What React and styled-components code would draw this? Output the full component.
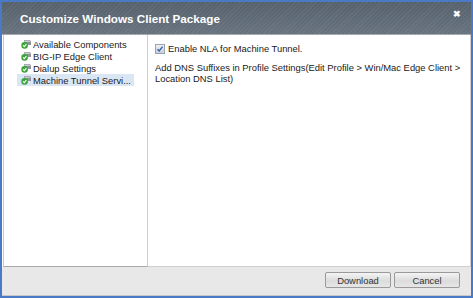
import React from "react";
import styled, { createGlobalStyle } from "styled-components";

const GlobalStyle = createGlobalStyle`
  html, body {
    margin: 0;
    padding: 0;
    background: #ffffff;
  }
  body {
    font-family: "Liberation Sans", Arial, sans-serif;
  }
`;

const Window = styled.div`
  box-sizing: border-box;
  width: 473px;
  height: 298px;
  border: 2px solid #4a79c6;
  display: flex;
  flex-direction: column;
  background: #e8e8e8;
`;

const TitleBar = styled.div`
  height: 32px;
  flex: none;
  display: flex;
  align-items: center;
  justify-content: space-between;
  padding: 0 10px 0 18px;
  background:
    repeating-linear-gradient(
      135deg,
      rgba(255, 255, 255, 0.05) 0px,
      rgba(255, 255, 255, 0.05) 1px,
      rgba(0, 0, 0, 0) 1px,
      rgba(0, 0, 0, 0) 3px
    ),
    linear-gradient(#56616c, #67737f);
  border-bottom: 1px solid #a3a9af;
`;

const Title = styled.div`
  color: #ffffff;
  font-weight: bold;
  font-size: 11.7px;
  margin-top: 1px;
`;

const CloseButton = styled.div`
  color: #ffffff;
  font-weight: bold;
  font-size: 9px;
  line-height: 1;
  margin-top: -7px;
`;

const Body = styled.div`
  flex: 1;
  display: flex;
  padding-left: 1px;
  background: #ffffff;
  min-height: 0;
`;

const TreePanel = styled.div`
  box-sizing: border-box;
  width: 145px;
  flex: none;
  border-left: 1px solid #c9c9c9;
  border-right: 1px solid #cfcfcf;
  border-bottom: 1px solid #a9a9a9;
  padding: 3px 0 0 13px;
  display: flex;
  flex-direction: column;
`;

const TreeRow = styled.div`
  width: 117px;
  height: 12px;
  display: flex;
  align-items: center;
  gap: 2px;
  padding-left: 4px;
  box-sizing: border-box;
  background: ${(p) => (p.$selected ? "#dbe6f5" : "transparent")};
  font-size: 9.4px;
  color: #1a1a1a;
  white-space: nowrap;
`;

const ContentPanel = styled.div`
  flex: 1;
  box-sizing: border-box;
  padding: 8px 0 0 7px;
  border-right: 1px solid #d0d0d0;
  border-bottom: 1px solid #cfcfcf;
  font-size: 9.4px;
  color: #1a1a1a;
`;

const CheckRow = styled.label`
  display: flex;
  align-items: center;
  gap: 3px;
  height: 11px;
`;

const CheckBox = styled.span`
  box-sizing: border-box;
  width: 10px;
  height: 10px;
  border: 1px solid #9aa3ad;
  background: linear-gradient(#eef1f5, #c9d0d9);
  display: flex;
  align-items: center;
  justify-content: center;
`;

const Note = styled.p`
  margin: 8px 0 0 0;
  width: 310px;
  line-height: 11px;
`;

const Footer = styled.div`
  height: 29px;
  flex: none;
  box-sizing: border-box;
  display: flex;
  align-items: center;
  justify-content: flex-end;
  gap: 3px;
  padding: 0 11px 2px 0;
  border-bottom: 1px solid #c8c8c8;
  background: #e8e8e8;
`;

const Button = styled.button`
  width: 66px;
  height: 16px;
  padding: 0;
  border: 1px solid #9a9a9a;
  border-radius: 2px;
  background: linear-gradient(#f4f4f4, #dcdcdc 55%, #e6e6e6);
  font-family: "Liberation Sans", Arial, sans-serif;
  font-size: 9.4px;
  color: #333333;
`;

const ComponentIcon = () => (
  <svg width="10" height="10" viewBox="0 0 10 10">
    <path d="M3 1 L9 1 L10 3 L10 6 L4 6 Z" fill="#8e9499" />
    <path d="M3.5 1.5 L8.5 1.5 L9 3 L4 3 Z" fill="#c8ccd0" />
    <circle cx="3.6" cy="6.4" r="3.3" fill="#3aa33a" />
    <path d="M2 6.4 L3.3 7.7 L5.4 5.2" stroke="#ffffff" strokeWidth="1.1" fill="none" />
  </svg>
);

const treeItems = [
  "Available Components",
  "BIG-IP Edge Client",
  "Dialup Settings",
  "Machine Tunnel Servi...",
];

export default function App() {
  return (
    <>
      <GlobalStyle />
      <Window>
        <TitleBar>
          <Title>Customize Windows Client Package</Title>
          <CloseButton>✖</CloseButton>
        </TitleBar>
        <Body>
          <TreePanel>
            {treeItems.map((item, i) => (
              <TreeRow key={item} $selected={i === 3}>
                <ComponentIcon />
                {item}
              </TreeRow>
            ))}
          </TreePanel>
          <ContentPanel>
            <CheckRow>
              <CheckBox>
                <svg width="8" height="8" viewBox="0 0 8 8">
                  <path d="M1.5 4.2 L3.2 6 L6.6 1.6" stroke="#2f5fb0" strokeWidth="1.3" fill="none" />
                </svg>
              </CheckBox>
              Enable NLA for Machine Tunnel.
            </CheckRow>
            <Note>
              Add DNS Suffixes in Profile Settings(Edit Profile &gt; Win/Mac Edge Client &gt; Location DNS List)
            </Note>
          </ContentPanel>
        </Body>
        <Footer>
          <Button>Download</Button>
          <Button>Cancel</Button>
        </Footer>
      </Window>
    </>
  );
}
